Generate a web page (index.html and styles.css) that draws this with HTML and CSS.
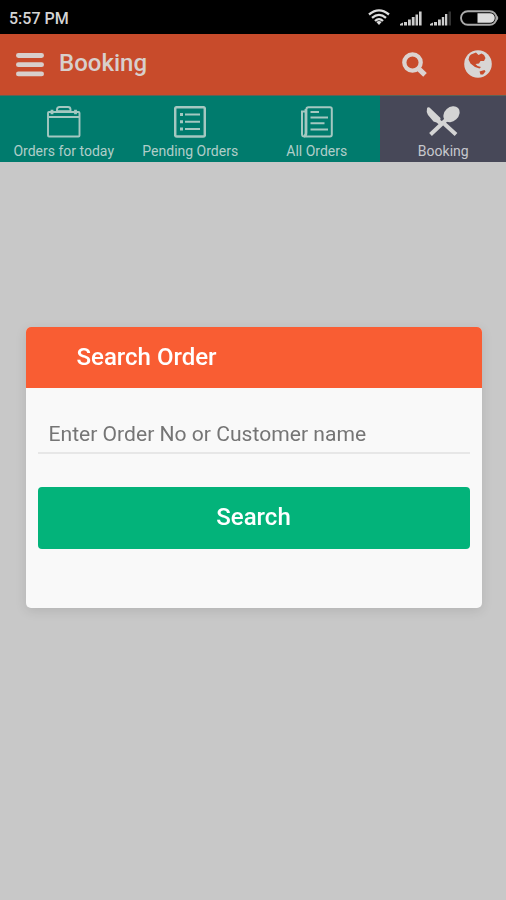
FILE: index.html
```
<!DOCTYPE html>
<html lang="en">
<head>
    <meta charset="UTF-8">
    <meta name="viewport" content="width=device-width, initial-scale=1.0">
    <title>Booking</title>
    <link rel="stylesheet" href="styles.css">
</head>
<body>
    <div class="status-bar">
        <span class="clock">5:57 PM</span>
        <div class="status-icons">
            <svg class="wifi" width="22" height="16" viewBox="0 0 22 16" fill="none" stroke="#ddd" stroke-width="2.3">
                <path d="M1 5.500Q11-2.800 21 5.500M4 8.900Q11 2.800 18 8.900M7 12Q11 8.200 15 12"/>
                <path d="M11 16L8.400 12.900Q11 10.900 13.600 12.900Z" fill="#ddd" stroke="none"/>
            </svg>
            <svg class="signal" width="22" height="15" viewBox="0 0 22 15" fill="#ccc">
                <path d="M0 14.500V13L3 11.500V14.500ZM4 11H7V14.500H4ZM8 8.500H10.800V14.500H8ZM11.800 6H14.600V14.500H11.800ZM15.500 3.500H18V14.500H15.500ZM19 .5H21.600V14.500H19Z"/>
            </svg>
            <svg class="signal" width="22" height="15" viewBox="0 0 22 15" fill="#ccc">
                <path d="M0 14.500V13L3 11.500V14.500ZM4 11H7V14.500H4ZM8 8.500H10.800V14.500H8ZM11.800 6H14.200V14.500H11.800ZM15 3H17.300V14.500H15Z"/>
                <path d="M18.500 .5H21V14.500H18.500Z" fill="#333"/>
            </svg>
            <svg class="battery" width="39" height="16" viewBox="0 0 39 16">
                <rect x="1" y="1.200" width="35.500" height="13.600" rx="6.800" fill="none" stroke="#aaa" stroke-width="1.900"/>
                <path d="M17.500 3.200H30A4.800 4.800 0 0 1 30 12.800H17.500Z" fill="#ddd"/>
                <path d="M37 5.500Q39.500 8 37 10.500Z" fill="#aaa"/>
            </svg>
        </div>
    </div>

    <header class="app-bar">
        <svg class="menu" width="28" height="26" viewBox="0 0 28 26" fill="none" stroke="#d8cfcc" stroke-width="4.800" stroke-linecap="round">
            <path d="M2.400 3.500H25.600M2.400 12.700H25.600M2.400 21.900H25.600"/>
        </svg>
        <h1>Booking</h1>
        <svg class="search" width="26" height="26" viewBox="0 0 26 26" fill="none" stroke="#dcd3d0">
            <circle cx="10.500" cy="10.500" r="8.200" stroke-width="4.300"/>
            <path d="M16.200 16.400L23 22.800" stroke-width="5.200"/>
        </svg>
        <svg class="globe" width="28" height="28" viewBox="0 0 28 28">
            <circle cx="14" cy="14" r="13.800" fill="#d8d5d4"/>
            <path d="M7 4.500L12 2.500L14.500 5L17.500 3.500L20 5L21.500 8L20 11L16.500 11L15 13.500L11.500 14L13.500 16L17 17L15.500 18.500L11 17L6.500 13.500L4.500 9.500L5.500 6Z" fill="#c84b2b"/>
            <path d="M15.500 21.500L20.500 20L21.500 21.500L19 24.500L16.500 24.500Z" fill="#c84b2b"/>
        </svg>
    </header>

    <nav class="tabs">
        <a class="tab">
            <svg width="34" height="32" viewBox="0 0 34 32" fill="none" stroke="#a4c8c1" stroke-width="1.900">
                <rect x="1" y="6" width="31.500" height="24.500" rx="1"/>
                <path d="M1.500 11H32M10 5V3.500Q10 1 12.500 1H21Q23.500 1 23.500 3.500V5"/>
                <path d="M9.500 5.300H24" stroke-width="2.200"/>
                <path d="M5 3.800V8.200M28.500 3.800V8.200" stroke-width="2.800"/>
            </svg>
            <span>Orders for today</span>
        </a>
        <a class="tab">
            <svg width="32" height="32" viewBox="0 0 32 32" fill="none" stroke="#a4c8c1" stroke-width="2">
                <rect x="1.200" y="1.200" width="29.600" height="29.300" rx="1.500" stroke-width="2.500"/>
                <path d="M11 8.500H26M11 15.800H26M11 23.100H26"/>
                <path d="M6 8.500H9M6 15.800H9M6 23.100H9" stroke-width="3"/>
            </svg>
            <span>Pending Orders</span>
        </a>
        <a class="tab">
            <svg width="32" height="32" viewBox="0 0 32 32" fill="none" stroke="#a4c8c1" stroke-width="2">
                <path d="M5.500 3Q5.500 1.200 7.500 1.200H29Q30.800 1.200 30.800 3V28.500Q30.800 30.500 29 30.500H3.500Q1 30.500 1 28V5.500H5.500"/>
                <path d="M5 3V26.500Q5 30 3 30" stroke-width="2.800"/>
                <path d="M9.500 6H18M9.500 11.600H27M9.500 17.200H23.500M9.500 23.500H27"/>
            </svg>
            <span>All Orders</span>
        </a>
        <a class="tab active">
            <svg width="34" height="32" viewBox="0 0 34 32" fill="#d4d4d4">
                <path d="M1 2.500Q1.500 .5 3.500 1.500L14.500 12L14.300 14L16.500 15.500L13 18.500L10.500 16.500L7.500 15.500L2 9Q0 5.500 1 2.500Z"/>
                <path d="M18.500 18L30 28.500M4.500 28.500L21 13" fill="none" stroke="#d4d4d4" stroke-width="4"/>
                <ellipse cx="25.500" cy="8.200" rx="9" ry="7" transform="rotate(-43 25.500 8.200)"/>
            </svg>
            <span>Booking</span>
        </a>
    </nav>

    <div class="overlay">
        <form class="dialog">
            <h2>Search Order</h2>
            <div class="dialog-body">
                <input type="text" placeholder="Enter Order No or Customer name">
                <button type="button">Search</button>
            </div>
        </form>
    </div>
</body>
</html>
```
FILE: styles.css
```
* {
    box-sizing: border-box;
}
body {
    margin: 0;
    height: 900px;
    overflow: hidden;
    background-color: #c8c8c8;
    font-family: Roboto, "Liberation Sans", sans-serif;
}
svg {
    display: block;
    flex: none;
}
.status-bar {
    display: flex;
    align-items: center;
    justify-content: space-between;
    height: 34px;
    padding: 2px 7px 0 9px;
    background-color: #000;
    color: #d4d4d4;
}
.clock {
    font-size: 16px;
    font-weight: 500;
    line-height: 20px;
    padding-top: 1px;
}
.status-icons {
    display: flex;
    align-items: center;
}
.wifi {
    margin: 0 10px 2px 0;
}
.signal {
    margin-right: 8px;
}
.battery {
    margin-bottom: 1px;
}
.app-bar {
    display: flex;
    align-items: center;
    height: 61px;
    padding: 0 14px 3px 16px;
    background-color: #c84b2b;
}
.app-bar h1 {
    flex: 1;
    margin: 0 0 0 15px;
    color: #d8cfcc;
    font-size: 24px;
    font-weight: 500;
}
.app-bar .menu {
    margin-top: 3px;
}
.app-bar .search {
    margin: 3px 36px 0 0;
}
.app-bar .globe {
    margin-top: 2px;
}
.tabs {
    display: grid;
    grid-template-columns: repeat(4, 1fr);
    height: 67px;
    background-color: #007b6d;
}
.tab {
    display: flex;
    flex-direction: column;
    align-items: center;
    padding: 10px 0 0 1px;
    border-top: 1px solid #5f6255;
    color: #b0cec9;
    font-size: 14px;
    line-height: 18px;
}
.tab span {
    margin-top: 4px;
    white-space: nowrap;
}
.tab.active {
    background-color: #474858;
    color: #c6c7cd;
}
.overlay {
    position: fixed;
    inset: 34px 0 0;
    display: flex;
    align-items: center;
    justify-content: center;
    padding-left: 1px;
}
.dialog {
    width: 456px;
    height: 281px;
    overflow: hidden;
    border-radius: 5px;
    background-color: #f9f9f9;
    box-shadow: 0 3px 12px rgba(0, 0, 0, 0.1);
}
.dialog h2 {
    height: 61px;
    margin: 0;
    padding-left: 51px;
    background-color: #f95d33;
    color: #fff;
    font-size: 24px;
    font-weight: 500;
    line-height: 60px;
}
.dialog-body {
    padding: 24px 12px 0;
}
.dialog input {
    display: block;
    width: 100%;
    height: 42px;
    margin-bottom: 33px;
    padding: 3px 11px 0;
    border: none;
    border-bottom: 2px solid #e7e7e7;
    outline: none;
    background: none;
    font-family: inherit;
    font-size: 21.1px;
}
.dialog input::placeholder {
    color: #757575;
}
.dialog button {
    display: block;
    width: 100%;
    height: 62px;
    padding: 0 0 1px;
    border: none;
    border-radius: 4px;
    background-color: #03b37a;
    color: #fff;
    font-family: inherit;
    font-size: 24px;
    font-weight: 500;
}
```
